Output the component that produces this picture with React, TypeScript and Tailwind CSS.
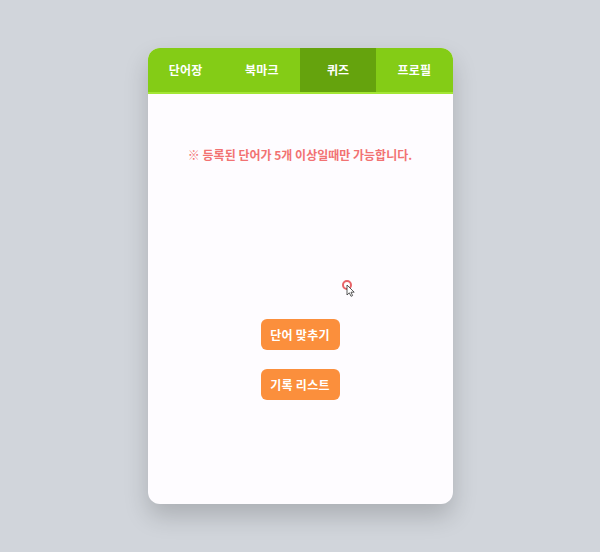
import { useState } from "react"

const tabs = ["단어장", "북마크", "퀴즈", "프로필"]

export default function App() {
  const [active, setActive] = useState(2)

  return (
    <div
      className="w-[600px] h-[552px] bg-[#d1d5db] flex items-center justify-center"
      style={{ fontFamily: '"Noto Sans CJK KR", "Noto Sans", sans-serif' }}
    >
      <div className="relative w-[305px] h-[456px] bg-[#fefcff] rounded-xl overflow-hidden shadow-[0_12px_24px_rgba(0,0,0,0.18)]">
        {/* Tabs */}
        <div className="flex h-[46px] bg-[#84cc16] border-b-2 border-[#a3e635]">
          {tabs.map((tab, i) => (
            <button
              key={tab}
              onClick={() => setActive(i)}
              className={`flex-1 flex items-center justify-center text-[12px] font-bold text-white tracking-[0.2px] ${
                active === i ? "bg-[#65a30d]" : ""
              }`}
            >
              {tab}
            </button>
          ))}
        </div>

        {/* Quiz body */}
        <div className="flex flex-col items-center pt-[52px]">
          <p className="text-[12px] font-bold text-[#f27272]">
            ※ 등록된 단어가 5개 이상일때만 가능합니다.
          </p>

          <div className="flex flex-col items-center gap-[19px] mt-[155px]">
            <button className="w-[79px] h-[31px] rounded-md bg-[#fb8f3c] text-white text-[12px] font-bold tracking-[0.3px]">
              단어 맞추기
            </button>
            <button className="w-[79px] h-[31px] rounded-md bg-[#fb8f3c] text-white text-[12px] font-bold tracking-[0.3px]">
              기록 리스트
            </button>
          </div>
        </div>

        {/* Cursor overlay */}
        <svg className="absolute left-[193px] top-[231px]" width="16" height="18" viewBox="0 0 16 18">
          <circle cx="6" cy="6" r="4" fill="#fff" stroke="#e5484d" strokeWidth="2" opacity="0.85" />
          <path d="M6 6 L6 16 L8.3 13.8 L10 17.3 L11.6 16.6 L10 13.2 L13.2 13.2 Z" fill="#fff" stroke="#333" strokeWidth="0.8" />
        </svg>
      </div>
    </div>
  )
}
